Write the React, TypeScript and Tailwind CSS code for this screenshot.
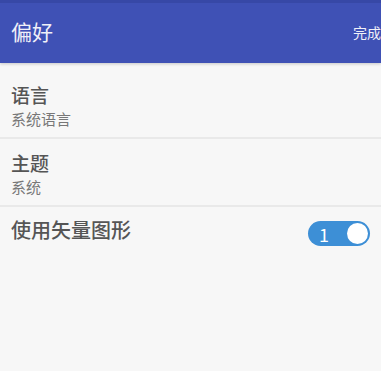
const font = { fontFamily: '"Noto Sans CJK SC", "Noto Sans", sans-serif' };

const Row = ({ title, subtitle }: { title: string; subtitle: string }) => (
  <div className="h-[68px] border-b-2 border-[#e9e9e9] pl-[11px] pt-[12px]">
    <div className="text-[19px] leading-[24px] font-medium text-[#555555]">{title}</div>
    <div className="mt-[3px] text-[15px] leading-[18px] text-[#777777]">{subtitle}</div>
  </div>
);

const App = () => {
  return (
    <div className="w-[381px] h-[371px] bg-[#f7f7f7] overflow-hidden" style={font}>
      <div className="h-[63px] bg-[#3f51b5] border-t-[3px] border-[#3748a6] flex items-center justify-between pl-[11px] shadow-[0_1px_3px_rgba(0,0,0,0.2)]">
        <span className="text-[21px] text-[#f0f0f8] -mt-[3px]">偏好</span>
        <span className="text-[14px] text-[#f0f0f8] -mt-[2px] whitespace-nowrap">完成</span>
      </div>
      <div className="pt-[8px]">
        <Row title="语言" subtitle="系统语言" />
        <Row title="主题" subtitle="系统" />
        <div className="flex items-start justify-between pl-[11px] pr-[11px] pt-[10px]">
          <span className="text-[20px] leading-[26px] font-medium text-[#555555]">使用矢量图形</span>
          <div className="mt-[4px] w-[62px] h-[25px] rounded-full bg-[#3d8fd6] flex items-center justify-between pl-[11px] pr-[2px]">
            <span className="text-[18px] text-white leading-none">1</span>
            <span className="w-[21px] h-[21px] rounded-full bg-white" />
          </div>
        </div>
      </div>
    </div>
  );
};

export default App;
